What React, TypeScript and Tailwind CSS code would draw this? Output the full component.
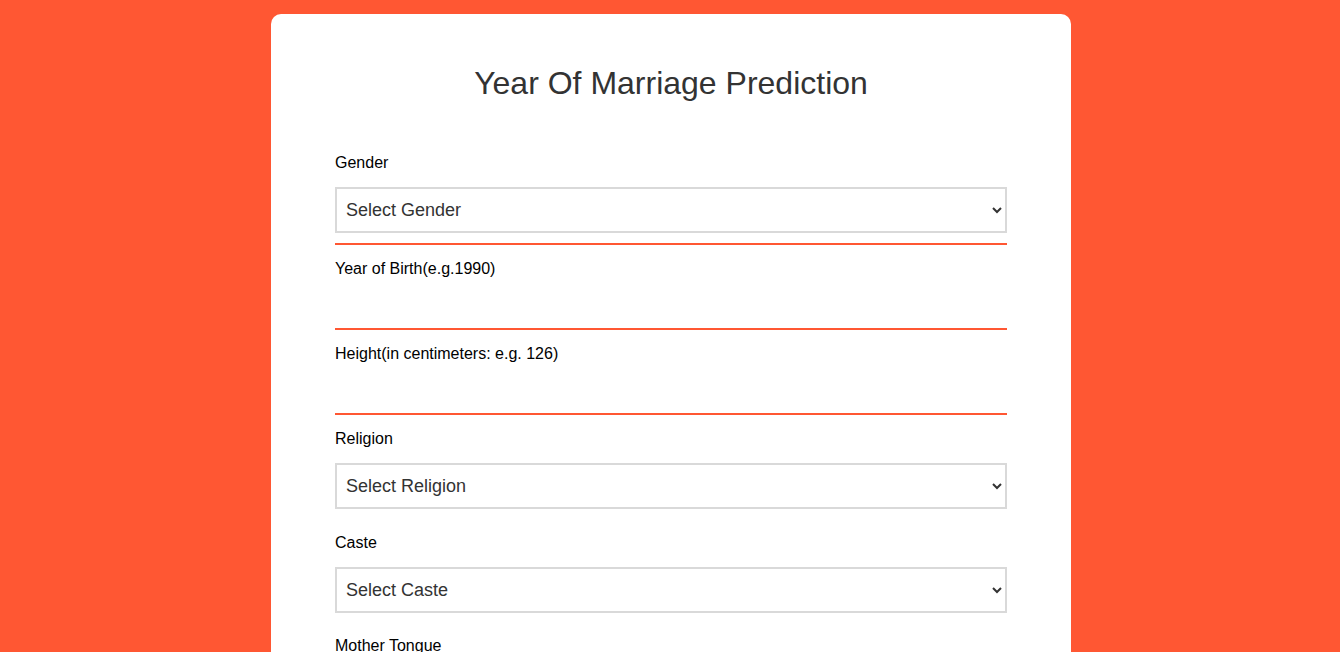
import React from "react";

const font = { fontFamily: '"Liberation Sans", Arial, sans-serif' };

function SelectField({ label, placeholder, gapTop }: { label: string; placeholder: string; gapTop: string }) {
  return (
    <div className={gapTop}>
      <label className="block text-[16px] leading-[18px] text-black">{label}</label>
      <select
        defaultValue=""
        className="mt-[15px] block h-[46px] w-full border-2 border-[#d9d9d9] bg-white pl-[5px] pr-[8px] text-[18px] text-[#333333] outline-none"
        style={font}
      >
        <option value="" disabled>
          {placeholder}
        </option>
      </select>
    </div>
  );
}

function TextField({ label }: { label: string }) {
  return (
    <div className="mt-[15px]">
      <label className="block text-[16px] leading-[18px] text-black">{label}</label>
      <input
        type="text"
        className="block h-[52px] w-full border-0 border-b-2 border-[#ff5733] bg-transparent text-[18px] outline-none"
        style={font}
      />
    </div>
  );
}

export default function App() {
  return (
    <div className="min-h-screen bg-[#ff5733] pl-[2px] pt-[14px]" style={font}>
      <div className="mx-auto w-[800px] rounded-[10px] bg-white px-[64px] pb-[60px] pt-[51px]">
        <h1 className="text-center text-[32px] leading-[37px] text-[#333333]">Year Of Marriage Prediction</h1>
        <div className="mt-[52px]">
          <SelectField label="Gender" placeholder="Select Gender" gapTop="" />
          <div className="mt-[10px] h-[2px] w-full bg-[#ff5733]" />
          <TextField label="Year of Birth(e.g.1990)" />
          <TextField label="Height(in centimeters: e.g. 126)" />
          <SelectField label="Religion" placeholder="Select Religion" gapTop="mt-[15px]" />
          <SelectField label="Caste" placeholder="Select Caste" gapTop="mt-[25px]" />
          <SelectField label="Mother Tongue" placeholder="Select Mother Tongue" gapTop="mt-[24px]" />
          <SelectField label="Profession" placeholder="Select Profession" gapTop="mt-[24px]" />
        </div>
      </div>
    </div>
  );
}
